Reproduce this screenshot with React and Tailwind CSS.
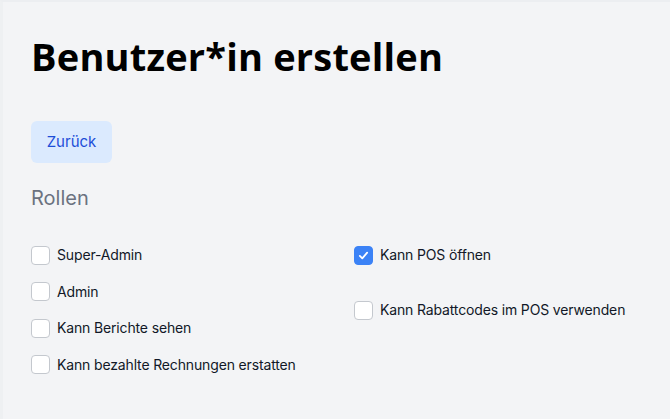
import React, { useState } from 'react';

const left = [
  { id: 'super', label: 'Super-Admin' },
  { id: 'admin', label: 'Admin' },
  { id: 'reports', label: 'Kann Berichte sehen' },
  { id: 'refund', label: 'Kann bezahlte Rechnungen erstatten' },
];

const right = [
  { id: 'pos', label: 'Kann POS öffnen' },
  { id: 'discount', label: 'Kann Rabattcodes im POS verwenden' },
];

function Check({ item, checked, onToggle }) {
  return (
    <label className="flex items-center gap-[7px] h-[18px] cursor-pointer">
      <span
        onClick={() => onToggle(item.id)}
        className={`w-[19px] h-[19px] rounded-[4px] flex items-center justify-center shrink-0 ${
          checked ? 'bg-[#3b82f6] border border-[#3b82f6]' : 'bg-white border border-[#c4c8ce]'
        }`}
      >
        {checked && (
          <svg viewBox="0 0 16 16" className="w-[13px] h-[13px]" fill="none" stroke="white" strokeWidth="2.2" strokeLinecap="round" strokeLinejoin="round">
            <path d="M3.5 8.5l3 3 6-7" />
          </svg>
        )}
      </span>
      <span className="text-[14px] tracking-[-0.15px] text-[#111827] leading-none">{item.label}</span>
    </label>
  );
}

export default function App() {
  const [checked, setChecked] = useState({ pos: true });
  const toggle = (id) => setChecked((c) => ({ ...c, [id]: !c[id] }));

  return (
    <div
      className="w-[670px] h-[419px] bg-[#f3f4f6] border-t-2 border-t-[#eceef1] border-l-[3px] border-l-[#eef0f2] overflow-hidden"
      style={{ fontFamily: 'Inter, "Noto Sans", sans-serif' }}
    >
      <div className="pl-[28px] pt-[35px]">
        <h1
          className="text-[38px] font-bold text-black leading-none tracking-[0.2px]"
          style={{ fontFamily: '"Open Sans", Inter, sans-serif' }}
        >
          Benutzer*in erstellen
        </h1>
        <button className="mt-[46px] w-[81px] h-[42px] rounded-md bg-[#dbeafe] text-[#1d4ed8] text-[15px]">
          Zurück
        </button>
        <h2 className="mt-[25px] text-[20px] text-[#6b7280] leading-none">Rollen</h2>
        <div className="mt-[38px] grid grid-cols-[323px_1fr]">
          <div className="flex flex-col gap-[18.5px]">
            {left.map((it) => (
              <Check key={it.id} item={it} checked={!!checked[it.id]} onToggle={toggle} />
            ))}
          </div>
          <div className="flex flex-col gap-[37px]">
            {right.map((it) => (
              <Check key={it.id} item={it} checked={!!checked[it.id]} onToggle={toggle} />
            ))}
          </div>
        </div>
      </div>
    </div>
  );
}
